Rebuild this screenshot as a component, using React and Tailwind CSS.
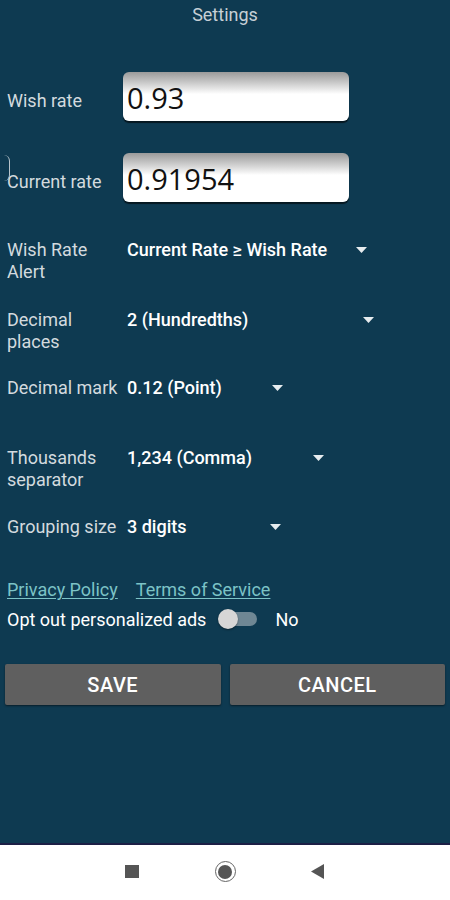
import { useState } from "react";

const font = { fontFamily: "Roboto, 'Noto Sans', sans-serif" };

const Arrow = () => (
  <svg width="11" height="6" viewBox="0 0 11 6" className="shrink-0">
    <path d="M0 0 L11 0 L5.5 6 Z" fill="#e6ecef" />
  </svg>
);

const RateInput = ({ value }) => (
  <div className="w-[226px] h-[49px] rounded-[6px] shadow-[0_2px_1px_rgba(0,0,0,0.6)] bg-gradient-to-b from-[#9a9a9a] via-white via-[45%] to-white flex items-center pl-[4px]">
    <span
      className="text-[29px] leading-none text-[#111] pt-[2px]"
      style={{ fontFamily: "'Open Sans', 'Noto Sans', sans-serif" }}
    >
      {value}
    </span>
  </div>
);

const SpinnerRow = ({ label, value, width, height }) => (
  <div className={`flex ${height}`}>
    <div className="w-[127px] pl-[7px] text-[18px] leading-[22px] text-[#d3dadf]">
      {label}
    </div>
    <div className={`flex items-start justify-between ${width}`}>
      <span className="text-[18px] leading-[22px] text-white font-medium">{value}</span>
      <div className="pt-[8px]">
        <Arrow />
      </div>
    </div>
  </div>
);

export default function App() {
  const [optOut, setOptOut] = useState(false);

  return (
    <div className="w-[450px] h-[900px] flex flex-col bg-[#0e3a51]" style={font}>
      <div className="flex-1 flex flex-col">
        <div className="h-[28px] flex items-center justify-center text-[18px] text-[#c6d0d6]">
          Settings
        </div>

        {/* rates */}
        <div className="flex mt-[44px]">
          <div className="w-[123px] pl-[7px] pt-[18px] text-[18px] leading-[22px] text-[#d3dadf]">
            Wish rate
          </div>
          <RateInput value="0.93" />
        </div>
        <div className="flex mt-[32px]">
          <div className="relative w-[123px] pl-[7px] pt-[18px] text-[18px] leading-[22px] text-[#d3dadf] whitespace-nowrap">
            <span className="absolute left-[4px] top-[2px] w-[6px] h-[26px] border-r-[1.5px] border-[#b8c4cb] rounded-r-[8px]" />
            Current rate
          </div>
          <RateInput value="0.91954" />
        </div>

        {/* spinners */}
        <div className="mt-[37px]">
          <SpinnerRow label={<>Wish Rate<br />Alert</>} value="Current Rate ≥ Wish Rate" width="w-[240px]" height="h-[70px]" />
          <SpinnerRow label={<>Decimal<br />places</>} value="2 (Hundredths)" width="w-[247px]" height="h-[68px]" />
          <SpinnerRow label="Decimal mark" value="0.12 (Point)" width="w-[156px]" height="h-[70px]" />
          <SpinnerRow label={<>Thousands<br />separator</>} value="1,234 (Comma)" width="w-[197px]" height="h-[69px]" />
          <SpinnerRow label="Grouping size" value="3 digits" width="w-[154px]" height="h-[63px]" />
        </div>

        {/* links */}
        <div className="flex gap-[18px] pl-[7px] text-[18px] leading-[22px] text-[#7cc3c6]">
          <a className="underline underline-offset-2">Privacy Policy</a>
          <a className="underline underline-offset-2">Terms of Service</a>
        </div>
        <div className="flex items-center pl-[7px] mt-[7px] h-[22px] text-[18px] text-white">
          <span>Opt out personalized ads</span>
          <button
            onClick={() => setOptOut(!optOut)}
            className="relative ml-[12px] w-[39px] h-[22px] flex items-center"
          >
            <span className="absolute left-[4px] right-0 h-[14px] rounded-full bg-[#6f8794]" />
            <span className="absolute left-0 w-[20px] h-[20px] rounded-full bg-[#d6d6d6] shadow-[0_1px_2px_rgba(0,0,0,0.4)]" />
          </button>
          <span className="ml-[18px]">{optOut ? "Yes" : "No"}</span>
        </div>

        {/* buttons */}
        <div className="flex gap-[9px] px-[5px] mt-[34px]">
          <button className="flex-1 h-[41px] rounded-[2px] bg-[#5f5f5f] shadow-[0_1px_2px_rgba(0,0,0,0.5)] text-white font-medium text-[20px] tracking-wide">
            SAVE
          </button>
          <button className="flex-1 h-[41px] rounded-[2px] bg-[#5f5f5f] shadow-[0_1px_2px_rgba(0,0,0,0.5)] text-white font-medium text-[20px] tracking-wide">
            CANCEL
          </button>
        </div>
      </div>

      {/* nav bar */}
      <div className="h-[2px] bg-[#1c1f45]" />
      <div className="h-[55px] bg-white flex items-center justify-center pb-[2px] pr-[2px]">
        <div className="w-[14px] h-[13px] bg-[#555]" />
        <div className="ml-[76px] w-[21px] h-[21px] rounded-full border-[1.5px] border-[#666] flex items-center justify-center">
          <div className="w-[14px] h-[14px] rounded-full bg-[#555]" />
        </div>
        <svg width="13" height="15" viewBox="0 0 13 15" className="ml-[75px]">
          <path d="M13 0 L13 15 L0 7.5 Z" fill="#555" />
        </svg>
      </div>
    </div>
  );
}
